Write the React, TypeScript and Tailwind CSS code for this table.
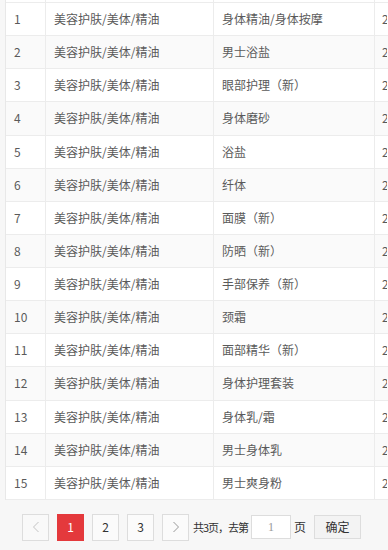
import React from "react";

const cats = [
  "身体精油/身体按摩",
  "男士浴盐",
  "眼部护理（新）",
  "身体磨砂",
  "浴盐",
  "纤体",
  "面膜（新）",
  "防晒（新）",
  "手部保养（新）",
  "颈霜",
  "面部精华（新）",
  "身体护理套装",
  "身体乳/霜",
  "男士身体乳",
  "男士爽身粉",
];

export default function App() {
  return (
    <div
      className="w-[388px] h-[550px] overflow-hidden bg-[#f7f7f7] text-[12px] text-[#5a5a5a]"
      style={{ fontFamily: '"Noto Sans CJK SC", "Noto Sans", sans-serif' }}
    >
      <div className="pl-[5px]">
        <div className="w-[600px] bg-white border-l border-[#e8e8e8]">
          <div className="flex h-[3px] border-b border-[#ececec]">
            <div className="w-[40px] border-r border-[#ececec]" />
            <div className="w-[168px] border-r border-[#ececec]" />
            <div className="w-[161px] border-r border-[#ececec]" />
            <div className="flex-1" />
          </div>
          {cats.map((c, i) => (
            <div
              key={i}
              className={`flex h-[33.14px] items-center border-b border-[#ececec] ${
                i % 2 === 1 ? "bg-[#fafafa]" : "bg-white"
              }`}
            >
              <div className="w-[40px] h-full flex items-center pl-[8px] border-r border-[#ececec]">
                {i + 1}
              </div>
              <div className="w-[168px] h-full flex items-center pl-[8px] border-r border-[#ececec]">
                美容护肤/美体/精油
              </div>
              <div className="w-[161px] h-full flex items-center pl-[8px] border-r border-[#ececec]">
                {c}
              </div>
              <div className="w-[12px] h-full flex items-center pl-[7px] overflow-hidden">2</div>
            </div>
          ))}
        </div>
      </div>
      <div className="flex items-center pl-[22px] pt-[14px]">
        <div className="w-[27px] h-[27px] border border-[#ddd] bg-[#f9f9f9] flex items-center justify-center">
          <svg width="8" height="12" viewBox="0 0 8 12" fill="none">
            <path d="M6.5 1L1.5 6L6.5 11" stroke="#c4c4c4" strokeWidth="1" />
          </svg>
        </div>
        <div className="ml-[8px] w-[27px] h-[27px] bg-[#e4393c] text-white flex items-center justify-center">
          1
        </div>
        <div className="ml-[8px] w-[27px] h-[27px] border border-[#ddd] bg-[#fbfbfb] text-[#333] flex items-center justify-center">
          2
        </div>
        <div className="ml-[8px] w-[27px] h-[27px] border border-[#ddd] bg-[#fbfbfb] text-[#333] flex items-center justify-center">
          3
        </div>
        <div className="ml-[8px] w-[27px] h-[27px] border border-[#ddd] bg-[#fbfbfb] flex items-center justify-center">
          <svg width="8" height="12" viewBox="0 0 8 12" fill="none">
            <path d="M1.5 1L6.5 6L1.5 11" stroke="#999" strokeWidth="1" />
          </svg>
        </div>
        <span className="ml-[4px] text-[11px] tracking-[-1px] whitespace-nowrap text-[#333]">共3页，去第</span>
        <div
          className="ml-[3px] w-[40px] h-[24px] border border-[#ddd] bg-white flex items-center justify-center text-[#999]"
          style={{ fontFamily: '"Liberation Serif", serif' }}
        >
          1
        </div>
        <span className="ml-[3px] text-[#333]">页</span>
        <div className="ml-[8px] w-[47px] h-[24px] border border-[#ddd] bg-[#f3f3f3] text-[#333] flex items-center justify-center">
          确定
        </div>
      </div>
    </div>
  );
}
